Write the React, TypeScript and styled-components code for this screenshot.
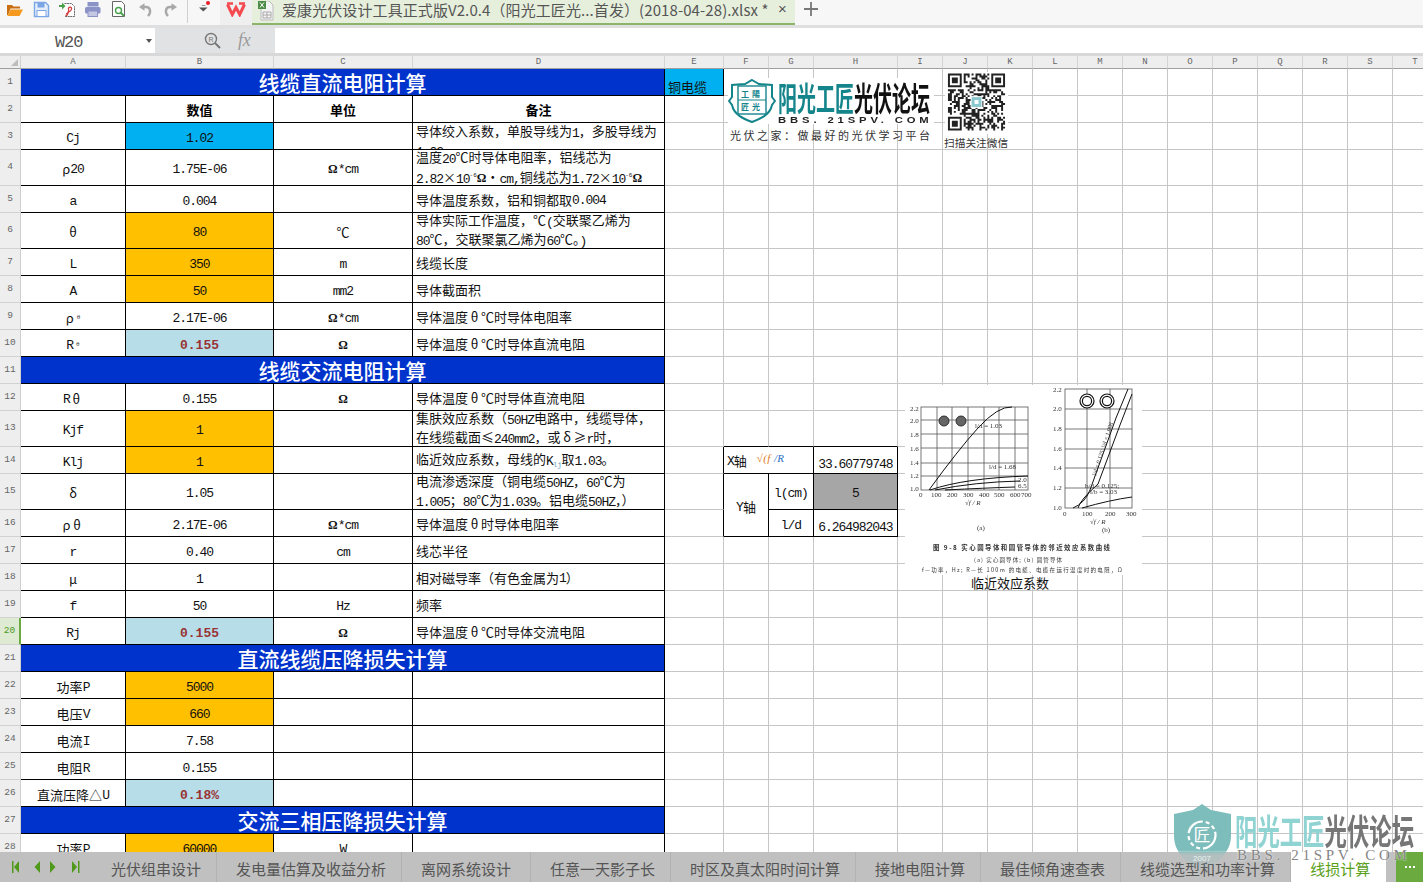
import React from "react";
import styled, { createGlobalStyle } from "styled-components";

const CJK = `"Noto Sans CJK SC", "Noto Sans", sans-serif`;
const MONO = `"Liberation Mono", "DejaVu Sans Mono", monospace`;

const Global = createGlobalStyle`
  html, body { margin: 0; padding: 0; background: #fff; overflow: hidden; }
  * { box-sizing: border-box; }
`;

const Page = styled.div`
  position: relative; width: 1423px; height: 882px; overflow: hidden;
  display: flex; flex-direction: column; font-family: ${CJK}; background: #fff;
`;

/* ---------- title bar ---------- */
const TitleBar = styled.div`
  height: 28px; flex: none; display: flex; background: #f7f7f7; border-bottom: 3px solid #dfdfdf;
`;
const QuickTools = styled.div`
  width: 220px; height: 25px; display: flex; align-items: center; flex: none;
`;
const QuickIcon = styled.svg<{ $w?: number }>`
  display: block; width: ${p => p.$w ?? 28}px; height: 25px; flex: none;
`;
const BrandSlot = styled.div`
  width: 32px; height: 25px; flex: none; background: #efefef; display: flex; justify-content: center; padding-top: 2px;
`;
const BrandMark = styled.svg`
  width: 22px; height: 15px; display: block;
`;
const DocTab = styled.div`
  width: 543px; height: 25px; flex: none; background: #e6efdc; border-bottom: 2px solid #8cb56c;
  display: flex; align-items: center; padding-left: 6px; color: #555; font-size: 15px; white-space: nowrap;
`;
const DocName = styled.span`
  margin: -4px 0 0 8px; width: 493px; flex: none; overflow: hidden; line-height: 22px; letter-spacing: 0.09px;
`;
const CloseMark = styled.span`
  font-size: 15px; color: #555; line-height: 16px; margin-left: 3px; margin-top: -6px; font-family: "Liberation Sans", sans-serif;
`;
const PlusIcon = styled.svg`
  width: 16px; height: 16px; margin: 1px 0 0 8px; flex: none;
`;

/* ---------- formula bar ---------- */
const FormulaRow = styled.div`
  height: 28px; flex: none; display: flex; background: #e1e2e4; border-bottom: 3px solid #d8d8d8;
`;
const NameBox = styled.div`
  width: 155px; display: flex; align-items: center; background: #fff; position: relative; padding: 3px 0 0 55px;
  font-family: ${MONO}; font-size: 17px; letter-spacing: -1.1px; color: #555;
`;
const NameCaret = styled.span`
  position: absolute; right: 3px; top: 11px; border: 3.5px solid transparent; border-top: 4px solid #555; border-bottom: 0;
`;
const FormulaTools = styled.div`
  width: 120px; display: flex; align-items: center; padding-left: 49px; gap: 17px;
`;
const Fx = styled.span`
  font-family: "Liberation Serif", serif; font-style: italic; font-size: 18px; color: #9a9a9a; letter-spacing: -0.3px;
`;
const FormulaInput = styled.div`
  flex: 1; background: #fff;
`;

/* ---------- sheet ---------- */
const COLS = [21, 105, 148, 139, 252, 59, 45, 45, 84, 45, 45, 45, 45, 45, 45, 45, 45, 45, 45, 45, 45];
const LETTERS = "ABCDEFGHIJKLMNOPQRST".split("");

const SheetGrid = styled.div`
  flex: 1; min-height: 0; overflow: hidden; display: grid; align-content: start;
  grid-template-columns: ${COLS.map(c => c + "px").join(" ")};
`;
const Corner = styled.div`
  height: 13px; background: #eeeeee; border-bottom: 1px solid #9f9f9f; border-right: 1px solid #cfcfcf; position: relative;
  &::after {
    content: ""; position: absolute; right: 2px; bottom: 2px; border-style: solid; border-width: 0 0 7px 7px;
    border-color: transparent transparent #bdbdbd transparent;
  }
`;
const ColHead = styled.div`
  height: 13px; background: #eeeeee; border-bottom: 1px solid #9f9f9f; border-right: 1px solid #d4d4d4;
  font-family: ${MONO}; font-size: 9px; line-height: 12px; color: #666; text-align: center;
`;
const RowHead = styled.div<{ $active?: boolean; $h: number }>`
  height: ${p => p.$h}px; background: ${p => (p.$active ? "#dfead3" : "#eeeeee")}; color: ${p => (p.$active ? "#4a9a1c" : "#666")};
  border-bottom: 1px solid #d2d2d2; border-right: ${p => (p.$active ? "2px solid #6aaa3e" : "1px solid #cfcfcf")};
  display: flex; align-items: center; justify-content: center; font-family: ${MONO}; font-size: 9.5px; padding-bottom: 2px;
`;
const line = (v?: "black" | "grid" | "none") => (v === "black" ? "#000" : v === "none" ? "transparent" : "#c6c6c6");
const Cell = styled.div<{
  $bg?: string; $span?: number; $rows?: number; $r?: "black" | "grid" | "none"; $b?: "black" | "grid" | "none";
  $left?: boolean; $end?: boolean; $top?: boolean; $lh?: number;
}>`
  grid-column: span ${p => p.$span ?? 1}; grid-row: span ${p => p.$rows ?? 1};
  background: ${p => p.$bg ?? "#fff"};
  border-right: 1px solid ${p => line(p.$r)}; border-bottom: 1px solid ${p => line(p.$b)};
  display: flex; overflow: hidden; min-width: 0; min-height: 0;
  align-items: ${p => (p.$top ? "flex-start" : p.$end ? "flex-end" : "center")};
  justify-content: ${p => (p.$left ? "flex-start" : "center")};
  padding: ${p => (p.$top ? "0 0 0 3px" : p.$left ? "1px 0 0 3px" : "3px 0 0 0")};
  font-size: 13px; line-height: ${p => p.$lh ?? 16}px; color: #111; white-space: nowrap;
`;
const TitleCell = styled(Cell)`
  padding: 0;
`;
const TitleText = styled.span`
  color: #fff; font-size: 21px; font-weight: 500; line-height: 24px; margin-top: -1px;
`;
const HeadText = styled.b`
  font-size: 13px; font-weight: 700; color: #000; margin-top: -1px;
`;
const Latin = styled.span`
  font-family: ${MONO}; font-size: 13px; letter-spacing: -1.05px; vertical-align: -1px; padding-top: 2px;
`;
const Wide = styled.span`
  display: inline-block; width: 13px; text-align: center;
`;
const Result = styled.b`
  font-family: ${MONO}; font-size: 13px; font-weight: 700; color: #993333; padding-top: 2px;
`;
const Sub = styled.span`
  font-family: ${MONO}; font-size: 6px; line-height: 0; vertical-align: -3px; margin-left: 3px; color: #333;
`;
const SubBlue = styled(Sub)`
  color: #6aa0c8; margin-left: 0; font-size: 8px; letter-spacing: -0.5px;
`;
const Sup = styled.span`
  font-family: ${MONO}; font-size: 6px; line-height: 0; vertical-align: 5px;
`;
const Omega = styled.b`
  font-family: "Liberation Serif", serif; font-size: 12px; font-weight: 700;
`;
const FormulaHint = styled.span`
  font-family: "Liberation Serif", serif; font-style: italic; font-size: 11px; color: #e07b16; margin: 0 0 6px 10px; letter-spacing: 0.4px;
`;
const HintBlue = styled.span`
  color: #2a6fc0;
`;

function m(s: string): React.ReactNode[] {
  return s.split(/([\x20-\x7e]+|[θδ])/).filter(Boolean).map((p, i) =>
    /^[\x20-\x7e]+$/.test(p) ? <Latin key={i}>{p}</Latin>
      : /^[θδ]$/.test(p) ? <Wide key={i}>{p}</Wide>
      : <React.Fragment key={i}>{p}</React.Fragment>
  );
}

const OHM_CM = <><Omega>Ω</Omega>{m("*cm")}</>;
const OHM = <Omega>Ω</Omega>;
const ORANGE = "#ffc000", SKY = "#00b0f0", PALE = "#b7dde8";

type RowDef =
  | { h: number; title: string }
  | { h: number; a?: React.ReactNode; b?: React.ReactNode; fill?: string; c?: React.ReactNode; d?: React.ReactNode; head?: boolean; top?: boolean; lh?: number };

const ROWS: RowDef[] = [
  { h: 27, title: "线缆直流电阻计算" },
  { h: 27, head: true, b: "数值", c: "单位", d: "备注" },
  { h: 27, a: m("Cj"), b: m("1.02"), fill: SKY, d: <span>{m("导体绞入系数，单股导线为1，多股导线为")}<br />{m("1.02")}</span>, top: true },
  { h: 36, a: <>ρ{m(" 20")}</>, b: m("1.75E-06"), c: OHM_CM, lh: 17, d: <span>{m("温度20℃时导体电阻率，铝线芯为")}<br />{m("2.82×10")}<Sup>-6</Sup><Omega>Ω</Omega>{m("·cm,铜线芯为1.72×10")}<Sup>-6</Sup><Omega>Ω</Omega></span> },
  { h: 27, a: m("a"), b: m("0.004"), d: m("导体温度系数，铝和铜都取0.004") },
  { h: 36, a: m("θ"), b: m("80"), fill: ORANGE, c: "℃", d: <span>{m("导体实际工作温度，℃(交联聚乙烯为")}<br />{m("80℃，交联聚氯乙烯为60℃。)")}</span> },
  { h: 27, a: m("L"), b: m("350"), fill: ORANGE, c: m("m"), d: "线缆长度" },
  { h: 27, a: m("A"), b: m("50"), fill: ORANGE, c: m("mm2"), d: "导体截面积" },
  { h: 27, a: <>ρ<Sub>θ</Sub></>, b: m("2.17E-06"), c: OHM_CM, d: m("导体温度θ℃时导体电阻率") },
  { h: 27, a: <>{m("R")}<Sub>θ</Sub></>, b: <Result>0.155</Result>, fill: PALE, c: OHM, d: m("导体温度θ℃时导体直流电阻") },
  { h: 27, title: "线缆交流电阻计算" },
  { h: 27, a: m("Rθ"), b: m("0.155"), c: OHM, d: m("导体温度θ℃时导体直流电阻") },
  { h: 36, a: m("Kjf"), b: m("1"), fill: ORANGE, d: <span>{m("集肤效应系数（50HZ电路中，线缆导体，")}<br />{m("在线缆截面≤240mm2，或δ≥r时，")}</span> },
  { h: 27, a: m("Klj"), b: m("1"), fill: ORANGE, d: <span>{m("临近效应系数，母线的K")}<SubBlue>lj</SubBlue>{m("取1.03。")}</span> },
  { h: 36, a: m("δ"), b: m("1.05"), d: <span>{m("电流渗透深度（铜电缆50HZ，60℃为")}<br />{m("1.005；80℃为1.039。铝电缆50HZ，）")}</span> },
  { h: 27, a: <>ρ{m(" θ")}</>, b: m("2.17E-06"), c: OHM_CM, d: m("导体温度θ时导体电阻率") },
  { h: 27, a: m("r"), b: m("0.40"), c: m("cm"), d: "线芯半径" },
  { h: 27, a: "μ", b: m("1"), d: m("相对磁导率（有色金属为1）") },
  { h: 27, a: m("f"), b: m("50"), c: m("Hz"), d: "频率" },
  { h: 27, a: m("Rj"), b: <Result>0.155</Result>, fill: PALE, c: OHM, d: m("导体温度θ℃时导体交流电阻") },
  { h: 27, title: "直流线缆压降损失计算" },
  { h: 27, a: m("功率P"), b: m("5000"), fill: ORANGE },
  { h: 27, a: m("电压V"), b: m("660"), fill: ORANGE },
  { h: 27, a: m("电流I"), b: m("7.58") },
  { h: 27, a: m("电阻R"), b: m("0.155") },
  { h: 27, a: m("直流压降△U"), b: <Result>0.18%</Result>, fill: PALE },
  { h: 27, title: "交流三相压降损失计算" },
  { h: 27, a: m("功率P"), b: m("60000"), fill: ORANGE, c: m("W") },
];

function extras(r: number): React.ReactNode {
  const out: React.ReactNode[] = [];
  LETTERS.slice(4).forEach((col) => {
    const k = `${r}${col}`;
    if (col === "E") {
      if (r === 1) out.push(<Cell key={k} $bg={SKY} $r="black" $b="black" $left $end><span>铜电缆</span></Cell>);
      else out.push(<Cell key={k} $r={r >= 14 && r <= 16 ? "black" : "grid"} />);
      return;
    }
    if (r === 13 && "FGH".includes(col)) { out.push(<Cell key={k} $b="black" />); return; }
    if (r === 14 && col === "F") {
      out.push(<Cell key={k} $span={2} $r="black" $b="black" $left>{m("X轴")}<FormulaHint>√(f <HintBlue>/R</HintBlue></FormulaHint></Cell>);
      return;
    }
    if (r === 14 && col === "G") return;
    if (r === 14 && col === "H") { out.push(<Cell key={k} $r="black" $b="black" $end><span>{m("33.60779748")}</span></Cell>); return; }
    if (r === 15 && col === "F") { out.push(<Cell key={k} $rows={2} $r="black" $b="black">{m("Y轴")}</Cell>); return; }
    if (r === 16 && col === "F") return;
    if (r === 15 && col === "G") { out.push(<Cell key={k} $r="black" $b="black">{m("l(cm)")}</Cell>); return; }
    if (r === 16 && col === "G") { out.push(<Cell key={k} $r="black" $b="black">{m("l/d")}</Cell>); return; }
    if (r === 15 && col === "H") { out.push(<Cell key={k} $bg="#a6a6a6" $r="black" $b="black">{m("5")}</Cell>); return; }
    if (r === 16 && col === "H") { out.push(<Cell key={k} $r="black" $b="black" $end><span>{m("6.264982043")}</span></Cell>); return; }
    out.push(<Cell key={k} />);
  });
  return out;
}

/* ---------- tabs ---------- */
const TabBar = styled.div`
  height: 30px; flex: none; display: flex; background: #c0c0c0; color: #555; font-size: 15px; white-space: nowrap;
`;
const NavIcons = styled.svg`
  width: 92px; height: 30px; flex: none; display: block;
`;
const SheetTab = styled.div<{ $active?: boolean; $extra?: number }>`
  padding: 3px ${p => 15 + (p.$extra ?? 0)}px 0 19px; display: flex; align-items: center; flex: none;
  border-right: 1px solid ${p => (p.$active ? "#fff" : "#b2b2b2")};
  background: ${p => (p.$active ? "#fff" : "transparent")}; color: ${p => (p.$active ? "#5aa019" : "#555")};
`;
const MoreTabs = styled.div`
  margin-left: auto; width: 27px; background: #6aaa3e; color: #fff; display: flex; align-items: center; justify-content: center; gap: 2px;
`;
const Dot = styled.i`
  width: 2px; height: 2px; background: #fff; display: block;
`;

/* ---------- things lying over the cells ---------- */
const LogoBlock = styled.div`
  position: absolute; left: 728px; top: 78px; width: 206px; height: 46px; background: #fff; display: flex;
`;
const LogoShield = styled.svg`
  width: 48px; height: 45px; flex: none; display: block;
`;
const LogoWords = styled.div`
  margin-left: 2px; width: 154px; display: flex; flex-direction: column;
`;
const LogoName = styled.div`
  height: 38px; display: flex; font-size: 19px; font-weight: 700; line-height: 19px;
`;
const LogoPart = styled.span<{ $c: string }>`
  display: block; color: ${p => p.$c}; transform: scaleY(1.72); transform-origin: 0 0; margin-top: 2px;
`;
const LogoUrl = styled.div`
  font-family: "Liberation Sans", sans-serif; font-weight: 700; font-size: 9px; line-height: 8px; letter-spacing: 3.1px; color: #222;
  white-space: nowrap; transform: scaleX(1.25); transform-origin: 0 0;
`;
const Slogan = styled.div`
  position: absolute; left: 730px; top: 127px; font-size: 11px; line-height: 16px; letter-spacing: 2.5px; color: #333; white-space: nowrap;
`;
const QrBox = styled.svg`
  position: absolute; left: 945px; top: 72px; width: 63px; height: 62px; display: block; background: #fff;
`;
const QrCaption = styled.div`
  position: absolute; left: 944px; top: 135px; font-size: 10.7px; line-height: 16px; color: #333; white-space: nowrap;
`;
const ChartBox = styled.svg`
  position: absolute; left: 905px; top: 385px; width: 237px; height: 190px; display: block; background: #fff; filter: blur(0.3px);
`;
const ChartTitle = styled.div`
  position: absolute; left: 971px; top: 575px; font-size: 13px; line-height: 16px; color: #111; white-space: nowrap;
`;
const WatermarkShield = styled.svg`
  position: absolute; left: 1172px; top: 803px; width: 62px; height: 70px; display: block;
`;
const WatermarkName = styled.div`
  position: absolute; left: 1235px; top: 812px; display: flex; font-size: 22.4px; font-weight: 700; line-height: 22px; white-space: nowrap;
`;
const WatermarkPart = styled.span<{ $c: string }>`
  display: block; color: ${p => p.$c}; transform: scaleY(1.55); transform-origin: 0 0;
`;
const WatermarkUrl = styled.div`
  position: absolute; left: 1237px; top: 849px; font-family: "Liberation Serif", serif; font-size: 15px; line-height: 12px; letter-spacing: 3.7px;
  color: #858585; white-space: nowrap; text-shadow: 0 0 2px #fff;
`;

function QrCode() {
  const n = 29;
  let seed = 20180428;
  const cells: string[] = [];
  const inFinder = (x: number, y: number) => (x < 8 && y < 8) || (x >= n - 8 && y < 8) || (x < 8 && y >= n - 8);
  for (let y = 0; y < n; y++) for (let x = 0; x < n; x++) {
    seed = (seed * 1103515245 + 12345) & 0x7fffffff;
    const on = ((seed >> 16) & 1) === 1;
    if (on && !inFinder(x, y)) cells.push(`M${x} ${y}h1v1h-1z`);
  }
  const finder = (x: number, y: number) => `M${x} ${y}h7v7h-7zM${x + 1} ${y + 1}v5h5v-5zM${x + 2} ${y + 2}h3v3h-3z`;
  return (
    <QrBox viewBox="-1.5 -0.5 32 31">
      <path d={cells.join("")} fill="#222" />
      <path d={finder(0, 0) + finder(n - 7, 0) + finder(0, n - 7)} fill="#222" fillRule="evenodd" />
      <rect x="11.5" y="11.5" width="6" height="6" fill="#fff" />
      <rect x="12" y="12" width="5" height="5" fill="#8cc9cf" />
      <rect x="13.5" y="13.5" width="2" height="2" fill="#fff" />
    </QrBox>
  );
}

function Chart() {
  const vL = [937, 952, 968, 984, 999, 1015];
  const hL = [420, 434, 448, 463, 476];
  const vR = [1087, 1110];
  const hR = [409, 429, 449, 468, 488];
  const label = { fontFamily: "Liberation Serif, serif", fontSize: 7, fill: "#333" } as const;
  const cap = { fontFamily: CJK, fill: "#333" } as const;
  return (
    <ChartBox viewBox="905 385 237 190">
      <g stroke="#555" strokeWidth="0.8" fill="none">
        <rect x="921" y="407" width="107" height="83" />
        {vL.map(x => <line key={x} x1={x} x2={x} y1="407" y2="490" />)}
        {hL.map(y => <line key={y} x1="921" x2="1028" y1={y} y2={y} />)}
        <rect x="1065" y="389" width="67" height="119" />
        {vR.map(x => <line key={x} x1={x} x2={x} y1="389" y2="508" />)}
        {hR.map(y => <line key={y} x1="1065" x2="1132" y1={y} y2={y} />)}
      </g>
      <g stroke="#111" strokeWidth="1" fill="none">
        <path d="M929 490 Q958 450 978 428 T1012 407" />
        <path d="M930 490 Q965 478 1028 476" />
        <path d="M935 490 Q975 482 1020 481" />
        <path d="M945 490 Q985 488 1015 487" />
        <path d="M1073 508 Q1085 503 1090 490 L1116 418 L1128 389" />
        <path d="M1078 508 Q1080 500 1098 484 L1120 425 L1132 394" />
        <path d="M1082 508 Q1110 500 1132 497" />
      </g>
      <g stroke="#222" fill="#666" strokeWidth="0.9">
        <circle cx="944" cy="421" r="5" /><circle cx="961" cy="421" r="5" />
      </g>
      <g stroke="#111" fill="#fff" strokeWidth="1.2">
        <circle cx="1087" cy="401" r="7" /><circle cx="1107" cy="401" r="7" />
        <circle cx="1087" cy="401" r="4.6" /><circle cx="1107" cy="401" r="4.6" />
      </g>
      <g {...label}>
        {["2.2", "2.0", "1.8", "1.6", "1.4", "1.2", "1.0"].map((t, i) => <text key={t} x="910" y={[411, 423, 437, 451, 465, 478, 491][i]}>{t}</text>)}
        {["0", "100", "200", "300", "400", "500", "600", "700"].map((t, i) => <text key={t} x={[919, 931, 947, 963, 979, 994, 1010, 1021][i]} y="497">{t}</text>)}
        {["2.2", "2.0", "1.8", "1.6", "1.4", "1.2", "1.0"].map((t, i) => <text key={"r" + t} x="1053" y={[392, 411, 431, 451, 470, 490, 510][i]}>{t}</text>)}
        {["0", "100", "200", "300"].map((t, i) => <text key={"x" + t} x={[1063, 1082, 1105, 1126][i]} y="516">{t}</text>)}
        <text x="975" y="428">l/d = 1.03</text>
        <text x="989" y="469">l/d = 1.68</text>
        <text x="1018" y="482">2.0</text>
        <text x="1018" y="488">6.5</text>
        <text x="1085" y="488">b/d = 0.125;</text>
        <text x="1090" y="494">l/b = 3.03</text>
        <text x="965" y="505" fontStyle="italic">√f / R</text>
        <text x="1090" y="524" fontStyle="italic">√f / R</text>
        <text x="977" y="530">(a)</text>
        <text x="1102" y="532">(b)</text>
        <text x="0" y="0" transform="translate(1096 476) rotate(-72)" fontSize="6">l/d = 0.125; l/d = 1.008</text>
      </g>
      <text {...cap} x="933" y="550" fontSize="6.4" fontWeight="700" textLength="177">图 9-8 实心圆导体和圆管导体的邻近效应系数曲线</text>
      <text {...cap} x="974" y="562" fontSize="5.5" textLength="88">(a) 实心圆导体; (b) 圆管导体</text>
      <text {...cap} x="922" y="572" fontSize="5.5" textLength="200">f—功率，Hz; R—长 100m 的电缆、电缆在运行温度时的电阻，Ω</text>
    </ChartBox>
  );
}

export default function App() {
  return (
    <Page>
      <Global />
      <TitleBar>
        <QuickTools>
          <QuickIcon viewBox="0 0 28 25">
            <path d="M7 15V5h5l1.5 1.5H20V8.5H10.5L8 15z" fill="#c96f10" />
            <path d="M7.5 16l3-6.5H23L19.5 16z" fill="#f59a1e" />
          </QuickIcon>
          <QuickIcon viewBox="0 0 28 25">
            <path d="M6.5 2.5h11l3 3v11h-14z" fill="#e4edfb" stroke="#7ba6e6" strokeWidth="1.4" />
            <rect x="9.5" y="3" width="7" height="4.5" fill="#7ba6e6" />
            <rect x="9" y="10.5" width="9" height="6" fill="#fff" stroke="#7ba6e6" />
          </QuickIcon>
          <QuickIcon viewBox="0 0 28 25">
            <path d="M8.5 3.5h7l3 3v10h-10" fill="#fff" stroke="#666" strokeDasharray="2 0.6" />
            <path d="M3 5h3V2.5L9.5 6 6 9.5V7H3z" fill="#4aa04a" />
            <path d="M10 14c2-1 3-3 2.5-5S16 6 15.5 9s-3 2-3.5 4-1 3-2.5 2" fill="none" stroke="#d23c3c" strokeWidth="1.3" />
          </QuickIcon>
          <QuickIcon viewBox="0 0 26 25" $w={26}>
            <rect x="3.5" y="2" width="11" height="4.5" fill="#8a92c6" />
            <rect x="1" y="7" width="15.5" height="6.5" rx="1.5" fill="#8a92c6" />
            <rect x="4" y="11" width="9.5" height="5.5" fill="#c3c7e4" stroke="#8a92c6" />
          </QuickIcon>
          <QuickIcon viewBox="0 0 28 25">
            <path d="M2.5 1.5h9l3 3v12h-12z" fill="#fff" stroke="#666" />
            <circle cx="8.5" cy="10.5" r="3" fill="none" stroke="#49a04a" strokeWidth="1.4" />
            <path d="M10.5 12.5l3.5 3.5" stroke="#49a04a" strokeWidth="1.8" />
          </QuickIcon>
          <QuickIcon viewBox="0 0 26 25" $w={26}>
            <path d="M5 7h3c4.500 0 5.500 5.500 2 9" fill="none" stroke="#a8a8a8" strokeWidth="2.4" />
            <path d="M1 7l5.500-3.800v7.500z" fill="#a8a8a8" />
          </QuickIcon>
          <QuickIcon viewBox="0 0 22 25" $w={22}>
            <g transform="translate(14 0) scale(-1 1)">
              <path d="M5 7h3c4.500 0 5.500 5.500 2 9" fill="none" stroke="#a8a8a8" strokeWidth="2.4" />
              <path d="M1 7l5.500-3.800v7.500z" fill="#a8a8a8" />
            </g>
          </QuickIcon>
          <QuickIcon viewBox="0 0 34 25" $w={34}>
            <line x1="1.500" y1="0" x2="1.500" y2="23" stroke="#cfcfcf" />
            <rect x="16" y="5" width="3.500" height="1" fill="#999" />
            <path d="M13 7.500h8.500l-4.250 4z" fill="#555" />
            <circle cx="22" cy="3" r="2" fill="#ee1c25" />
          </QuickIcon>
        </QuickTools>
        <BrandSlot>
          <BrandMark viewBox="0 0 22 15">
            <path d="M2.500 2.500l4.800 10 3.700-7 3.700 7 4.800-10" fill="none" stroke="#f4494f" strokeWidth="3" strokeLinejoin="miter" />
            <path d="M2 1.500h6M14 1.500h6" stroke="#f4494f" strokeWidth="2.400" />
          </BrandMark>
        </BrandSlot>
        <DocTab>
          <svg width="16" height="21" viewBox="0 0 16 21">
            <path d="M3 0h8l4 4v15H3z" fill="#f4f4f4" stroke="#bbb" />
            <rect x="0" y="0" width="8" height="8" fill="#4c8b45" />
            <path d="M2 1.500l4 5M6 1.500l-4 5" stroke="#fff" />
            <path d="M5 11h8v6H5zM5 14h8M9 11v6" fill="none" stroke="#aaa" />
          </svg>
          <DocName>爱康光伏设计工具正式版V2.0.4（阳光工匠光...首发）(2018-04-28).xlsx *</DocName>
          <CloseMark>×</CloseMark>
        </DocTab>
        <PlusIcon viewBox="0 0 16 16"><path d="M8 1v14M1 8h14" stroke="#777" strokeWidth="1.8" /></PlusIcon>
      </TitleBar>
      <FormulaRow>
        <NameBox>W20<NameCaret /></NameBox>
        <FormulaTools>
          <svg width="17" height="17" viewBox="0 0 17 17">
            <circle cx="7" cy="7" r="5.5" fill="none" stroke="#777" strokeWidth="1.4" />
            <path d="M11 11l5 5" stroke="#777" strokeWidth="2" />
            <text x="4.500" y="9.500" fontSize="7" fontFamily="Liberation Sans, sans-serif" fill="#777">R</text>
          </svg>
          <Fx>fx</Fx>
        </FormulaTools>
        <FormulaInput />
      </FormulaRow>
      <SheetGrid>
        <Corner />
        {LETTERS.map(l => <ColHead key={l}>{l}</ColHead>)}
        {ROWS.map((row, i) => {
          const r = i + 1;
          return (
            <React.Fragment key={r}>
              <RowHead $h={row.h} $active={r === 20}>{r}</RowHead>
              {"title" in row ? (
                <TitleCell $span={4} $bg="#0033cc" $r="black" $b="black"><TitleText>{row.title}</TitleText></TitleCell>
              ) : (
                <>
                  <Cell $r="black" $b="black">{row.a}</Cell>
                  <Cell $r="black" $b="black" $bg={row.fill}>{row.head ? <HeadText>{row.b}</HeadText> : row.b}</Cell>
                  <Cell $r="black" $b="black">{row.head ? <HeadText>{row.c}</HeadText> : row.c}</Cell>
                  {row.head ? (
                    <Cell $r="black" $b="black"><HeadText>{row.d}</HeadText></Cell>
                  ) : (
                    <Cell $r="black" $b="black" $left $top={row.top} $lh={row.lh}>{row.d}</Cell>
                  )}
                </>
              )}
              {extras(r)}
            </React.Fragment>
          );
        })}
      </SheetGrid>
      <TabBar>
        <NavIcons viewBox="0 0 92 30">
          <g fill="#4f9a1a">
            <rect x="12" y="9" width="1.500" height="12" />
            <path d="M19 9v12l-5-6z" />
            <path d="M40 9v12l-5.500-6z" />
            <path d="M50 9v12l5.500-6z" />
            <path d="M72 9v12l5-6z" />
            <rect x="78" y="9" width="1.500" height="12" />
          </g>
        </NavIcons>
        <SheetTab>光伏组串设计</SheetTab>
        <SheetTab>发电量估算及收益分析</SheetTab>
        <SheetTab $extra={4}>离网系统设计</SheetTab>
        <SheetTab>任意一天影子长</SheetTab>
        <SheetTab>时区及真太阳时间计算</SheetTab>
        <SheetTab>接地电阻计算</SheetTab>
        <SheetTab>最佳倾角速查表</SheetTab>
        <SheetTab>线缆选型和功率计算</SheetTab>
        <SheetTab $active>线损计算</SheetTab>
        <MoreTabs><Dot /><Dot /><Dot /></MoreTabs>
      </TabBar>

      <LogoBlock>
        <LogoShield viewBox="0 0 48 45">
          <path d="M24 2l7 4 13 1v12l3 4-3 4c-2 10-12 14-20 17C16 41 6 37 4 27l-3-4 3-4V7l13-1z" fill="#fff" stroke="#15858c" strokeWidth="2" />
          <rect x="10" y="8" width="28" height="28" fill="#fff" stroke="#15858c" strokeWidth="1.400" />
          <line x1="10" y1="22" x2="38" y2="22" stroke="#15858c" />
          <text x="24" y="18.500" fontSize="8" textAnchor="middle" fill="#15858c" fontWeight="700" fontFamily={CJK} letterSpacing="3">工陽</text>
          <text x="24" y="32" fontSize="8" textAnchor="middle" fill="#15858c" fontWeight="700" fontFamily={CJK} letterSpacing="3">匠光</text>
        </LogoShield>
        <LogoWords>
          <LogoName>
            <LogoPart $c="#15858c">阳光工匠</LogoPart>
            <LogoPart $c="#111">光伏论坛</LogoPart>
          </LogoName>
          <LogoUrl>BBS. 21SPV. COM</LogoUrl>
        </LogoWords>
      </LogoBlock>
      <Slogan>光伏之家：做最好的光伏学习平台</Slogan>
      <QrCode />
      <QrCaption>扫描关注微信</QrCaption>
      <Chart />
      <ChartTitle>临近效应系数</ChartTitle>

      <WatermarkShield viewBox="0 0 62 70">
        <defs>
          <linearGradient id="wmFade" x1="0" y1="0" x2="0" y2="1">
            <stop offset="0" stopColor="#7dbdbb" />
            <stop offset="0.68" stopColor="#7dbdbb" />
            <stop offset="0.74" stopColor="#7dbdbb" stopOpacity="0.25" />
            <stop offset="1" stopColor="#7dbdbb" stopOpacity="0" />
          </linearGradient>
        </defs>
        <path d="M30 1l9 6 20 4v22c0 17-15 28-29 36C16 61 2 50 2 33V11l19-4z" fill="url(#wmFade)" />
        <circle cx="30" cy="32" r="13.500" fill="none" stroke="#fff" strokeWidth="2.200" strokeDasharray="20 3 4 3 4 3 4 3" />
        <text x="30" y="38" fontSize="17" textAnchor="middle" fill="#fff" fontFamily={CJK}>匠</text>
        <text x="30" y="58" fontSize="8" textAnchor="middle" fill="#e4f2f2" fontFamily="Liberation Sans, sans-serif">2007</text>
      </WatermarkShield>
      <WatermarkName>
        <WatermarkPart $c="#8fd3d2">阳光工匠</WatermarkPart>
        <WatermarkPart $c="#767676">光伏论坛</WatermarkPart>
      </WatermarkName>
      <WatermarkUrl>BBS. 21SPV. COM</WatermarkUrl>
    </Page>
  );
}
